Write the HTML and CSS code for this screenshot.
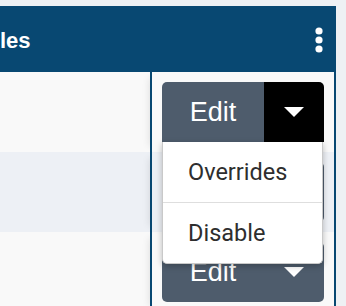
FILE: index.html
```html
<!DOCTYPE html>
<html lang="en">
<head>
  <meta charset="UTF-8" />
  <meta name="viewport" content="width=device-width, initial-scale=1.0"/>
  <link rel="stylesheet" href="styles.css">
  <title>Rules</title>
</head>
<body>
  <div class="panel">
    <div class="panel-head">
      <h2 class="title">les</h2>
      <button class="kebab" aria-label="More">
        <svg width="8" height="26" viewBox="0 0 8 26">
          <circle cx="4" cy="4" r="3.6" fill="#fff"/>
          <circle cx="4" cy="13" r="3.6" fill="#fff"/>
          <circle cx="4" cy="22" r="3.6" fill="#fff"/>
        </svg>
      </button>
    </div>

    <div class="rows">
      <div class="row">
        <div class="cell"></div>
        <div class="cell actions">
          <div class="split open">
            <button class="split-main">Edit</button>
            <button class="split-toggle"><span class="caret"></span></button>
            <ul class="menu">
              <li>Overrides</li>
              <li>Disable</li>
            </ul>
          </div>
        </div>
      </div>

      <div class="row alt">
        <div class="cell"></div>
        <div class="cell actions">
          <div class="split">
            <button class="split-main">Edit</button>
            <button class="split-toggle"><span class="caret"></span></button>
          </div>
        </div>
      </div>

      <div class="row">
        <div class="cell"></div>
        <div class="cell actions">
          <div class="split">
            <button class="split-main">Edit</button>
            <button class="split-toggle"><span class="caret"></span></button>
          </div>
        </div>
      </div>
    </div>
  </div>
</body>
</html>
```

FILE: styles.css
```css
body {
  margin: 0;
  background-color: #eef1f4;
  font-family: Roboto, "Liberation Sans", sans-serif;
  overflow: hidden;
}

.panel {
  width: 336px;
  margin-top: 6px;
}

.panel-head {
  height: 66px;
  background: #084872;
  display: flex;
  align-items: center;
  justify-content: space-between;
  padding-right: 13px;
}

.title {
  margin: 0;
  color: #fff;
  font-family: "Liberation Sans", Arial, sans-serif;
  font-size: 22px;
  font-weight: bold;
  line-height: 1;
  padding-top: 4px;
}

.kebab {
  border: none;
  background: none;
  padding: 0;
  display: flex;
  margin-top: 2px;
}

.row {
  display: grid;
  grid-template-columns: 150px 1fr;
  height: 80px;
  background: #f9f9f9;
}

.row.alt {
  background: #edf0f5;
}

.cell.actions {
  border-left: 2px solid #084872;
  border-right: 2px solid #084872;
  padding: 10px 9px 10px 10px;
  box-shadow: -6px 0 8px -6px rgba(0, 0, 0, 0.12);
}

.split {
  position: relative;
  display: flex;
  height: 60px;
  width: 162px;
  border-radius: 5px;
}

.split button {
  border: none;
  cursor: pointer;
  color: #fff;
  background-color: #4e5c6c;
}

.split-main {
  width: 102px;
  font-family: "Liberation Sans", Arial, sans-serif;
  font-size: 27px;
  padding: 0;
  border-radius: 5px 0 0 5px;
}

.split-toggle {
  width: 60px;
  padding: 0;
  display: flex;
  align-items: center;
  justify-content: center;
  border-radius: 0 5px 5px 0;
}

.split.open .split-main {
  border-radius: 5px 0 0 0;
}

.split.open .split-toggle {
  background-color: #000;
  border-radius: 0 5px 0 0;
}

.caret {
  width: 0;
  height: 0;
  border-left: 10px solid transparent;
  border-right: 10px solid transparent;
  border-top: 10px solid #fff;
}

.menu {
  position: absolute;
  top: 100%;
  left: 0;
  width: 159px;
  margin: 0;
  padding: 0;
  list-style-type: none;
  background: #fff;
  border: 1px solid #c9c9c9;
  border-top: none;
  border-radius: 0 0 5px 5px;
  box-shadow: 0 2px 6px rgba(0, 0, 0, 0.25);
  z-index: 2;
}

.menu li {
  height: 60px;
  display: flex;
  align-items: center;
  padding-left: 25px;
  font-size: 23.5px;
  color: #2e2e2e;
}

.menu li + li {
  border-top: 1px solid #dedede;
}
```
